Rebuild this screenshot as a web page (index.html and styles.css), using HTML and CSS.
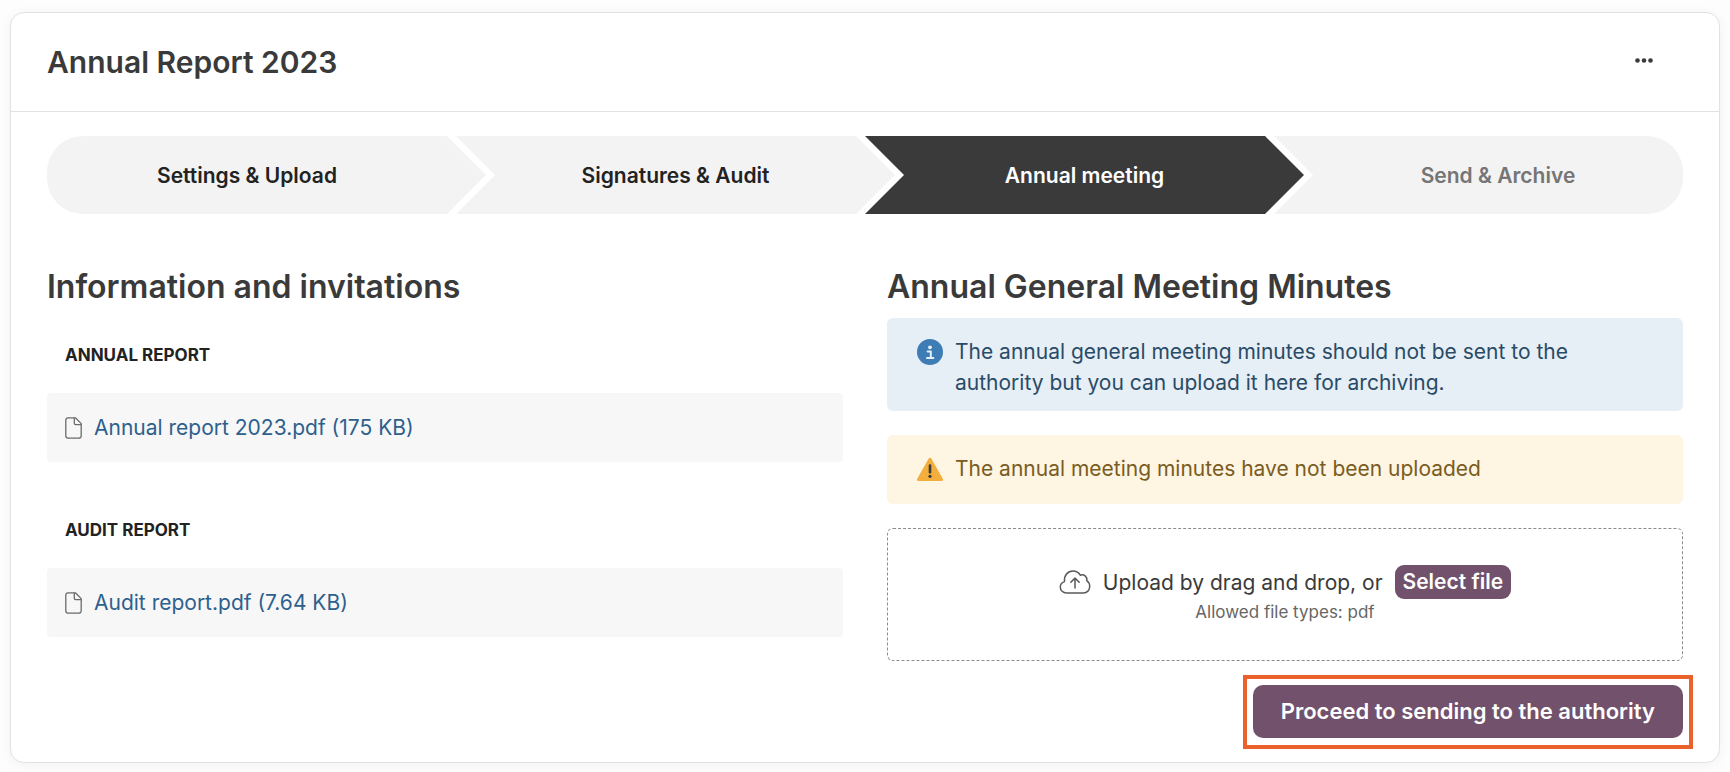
FILE: index.html
```html
<!DOCTYPE html>
<html lang="en">
<head>
  <meta charset="UTF-8">
  <meta name="viewport" content="width=device-width, initial-scale=1.0">
  <title>Annual Report 2023</title>
  <link rel="stylesheet" href="styles.css">
</head>
<body>
  <main class="card">
    <header class="card-header">
      <h1 class="title">Annual Report 2023</h1>
      <button class="more" type="button" aria-label="More options">
        <svg width="18" height="6" viewBox="0 0 18 6" fill="currentColor">
          <circle cx="2.5" cy="2.5" r="2.3"/>
          <circle cx="9" cy="2.5" r="2.3"/>
          <circle cx="15.5" cy="2.5" r="2.3"/>
        </svg>
      </button>
    </header>

    <div class="card-body">
      <ol class="steps">
        <li class="step first">Settings &amp; Upload</li>
        <li class="step">Signatures &amp; Audit</li>
        <li class="step active" aria-current="step">Annual meeting</li>
        <li class="step last">Send &amp; Archive</li>
      </ol>

      <div class="columns">
        <section class="column">
          <h2 class="heading">Information and invitations</h2>

          <div class="file-group">
            <h3 class="label">Annual report</h3>
            <div class="file">
              <svg class="file-icon" width="17" height="22" viewBox="0 0 17 22" fill="none" stroke="currentColor" stroke-width="1.3" stroke-linejoin="round">
                <path d="M3 .8h7.4l5.8 5.8v12.2a2.3 2.3 0 0 1-2.3 2.3H3A2.3 2.3 0 0 1 .8 18.8V3A2.3 2.3 0 0 1 3 .8z"/>
                <path d="M9.3.8v5.4c0 .9.5 1.4 1.4 1.4h5.4"/>
              </svg>
              <a class="file-link" href="#">Annual report 2023.pdf (175 KB)</a>
            </div>
          </div>

          <div class="file-group">
            <h3 class="label">Audit report</h3>
            <div class="file">
              <svg class="file-icon" width="17" height="22" viewBox="0 0 17 22" fill="none" stroke="currentColor" stroke-width="1.3" stroke-linejoin="round">
                <path d="M3 .8h7.4l5.8 5.8v12.2a2.3 2.3 0 0 1-2.3 2.3H3A2.3 2.3 0 0 1 .8 18.8V3A2.3 2.3 0 0 1 3 .8z"/>
                <path d="M9.3.8v5.4c0 .9.5 1.4 1.4 1.4h5.4"/>
              </svg>
              <a class="file-link" href="#">Audit report.pdf (7.64 KB)</a>
            </div>
          </div>
        </section>

        <section class="column">
          <h2 class="heading">Annual General Meeting Minutes</h2>

          <div class="alert info">
            <svg class="alert-icon" width="26" height="30" viewBox="0 0 26 30">
              <circle cx="13" cy="16" r="13" fill="#3e7cb5"/>
              <circle cx="13" cy="11.3" r="1.9" fill="#e6eef6"/>
              <path d="M10.6 15.4h3.2v6.4M10 22h6.4" fill="none" stroke="#e6eef6" stroke-width="2" stroke-linecap="round" stroke-linejoin="round"/>
            </svg>
            <p class="alert-text">The annual general meeting minutes should not be sent to the authority but you can upload it here for archiving.</p>
          </div>

          <div class="alert warning">
            <svg class="alert-icon" width="26" height="30" viewBox="0 0 26 30">
              <path d="M13 6.3 24.5 26.5H1.5z" fill="#f3ae3d" stroke="#f3ae3d" stroke-width="3" stroke-linejoin="round"/>
              <path d="M13 12.5v6.7" stroke="#3a3a3a" stroke-width="2.6" stroke-linecap="round"/>
              <circle cx="13" cy="23.3" r="1.6" fill="#3a3a3a"/>
            </svg>
            <p class="alert-text">The annual meeting minutes have not been uploaded</p>
          </div>

          <div class="dropzone">
            <div class="dropzone-row">
              <svg class="cloud" width="32" height="24" viewBox="0 0 31 24" fill="none" stroke="currentColor" stroke-width="1.5" stroke-linecap="round" stroke-linejoin="round">
                <path d="M7 23C3.5 23 .8 20.4.8 17.2c0-2.7 1.6-4.8 4.2-5.6C4.3 5.4 8.3 1 13.5 1c3.2 0 5.8 1.5 7.3 4.2 3.7-1.3 7 1.3 6.5 5.4 1.9 1.4 2.9 3.4 2.9 5.8 0 3.8-2.7 6.6-6.2 6.6z"/>
                <path d="M15.5 18V8.3M11.3 12.3l4.2-4.2 4.2 4.2"/>
              </svg>
              <span>Upload by drag and drop, or</span>
              <button class="select-file" type="button">Select file</button>
            </div>
            <p class="hint">Allowed file types: pdf</p>
          </div>

          <div class="actions">
            <div class="highlight">
              <button class="proceed" type="button">Proceed to sending to the authority</button>
            </div>
          </div>
        </section>
      </div>
    </div>
  </main>
</body>
</html>
```
FILE: styles.css
```css
* {
  box-sizing: border-box;
}

body {
  margin: 0;
  padding: 12px 10px 8px;
  font-family: 'Inter', 'Open Sans', sans-serif;
  font-size: 21px;
  line-height: 31px;
  color: #3a3a3a;
  background-color: #fdfdfd;
}

h1, h2, h3, p, ol {
  margin: 0;
  padding: 0;
}

.card {
  background-color: #fff;
  border: 1px solid #e2e2e2;
  border-radius: 14px;
  box-shadow: 0 2px 12px rgba(0, 0, 0, 0.05);
}

.card-header {
  display: flex;
  align-items: center;
  justify-content: space-between;
  padding: 29px 60px 28px 36px;
  border-bottom: 1px solid #e2e2e2;
}

.title {
  font-size: 30px;
  line-height: 41px;
  font-weight: 600;
}

.more {
  display: flex;
  padding: 4px 6px 8px;
  border: none;
  background: none;
  color: #3a3a3a;
  cursor: pointer;
}

.card-body {
  padding: 24px 36px;
}

/* Progress steps */
.steps {
  display: grid;
  grid-template-columns: repeat(4, 1fr);
  list-style: none;
}

.step {
  display: flex;
  align-items: center;
  justify-content: center;
  height: 78px;
  margin-right: -30px;
  font-weight: 600;
  color: #222;
  background-color: #f3f3f3;
  clip-path: polygon(0 0, calc(100% - 39px) 0, 100% 50%, calc(100% - 39px) 100%, 0 100%, 39px 50%);
}

.step.first {
  padding-right: 39px;
  border-radius: 36px 0 0 36px;
  clip-path: polygon(0 0, calc(100% - 39px) 0, 100% 50%, calc(100% - 39px) 100%, 0 100%);
}

.step.active {
  color: #fff;
  background-color: #3a3a3a;
}

.step.last {
  margin-right: 0;
  padding-left: 39px;
  border-radius: 0 36px 36px 0;
  color: #757575;
  clip-path: polygon(0 0, 100% 0, 100% 100%, 0 100%, 39px 50%);
}

.columns {
  display: grid;
  grid-template-columns: 1fr 1fr;
  gap: 44px;
  padding-top: 52px;
}

.heading {
  margin-bottom: 10px;
  font-size: 32px;
  line-height: 42px;
  font-weight: 600;
}

/* Files */
.file-group {
  margin-bottom: 31px;
}

.label {
  padding: 22px 18px;
  font-size: 17px;
  line-height: 31px;
  font-weight: 700;
  text-transform: uppercase;
  color: #222;
}

.file {
  display: flex;
  align-items: center;
  gap: 12px;
  height: 69px;
  padding: 0 18px;
  border-radius: 4px;
  background-color: #f7f7f7;
}

.file-icon {
  color: #6b6b6b;
}

.file-link {
  color: #2d608d;
  text-decoration: none;
}

/* Alerts */
.alert {
  display: flex;
  gap: 12px;
  min-height: 69px;
  margin-bottom: 24px;
  padding: 18px 30px 13px;
  border-radius: 6px;
}

.alert-icon {
  flex: none;
}

.info {
  color: #2a4b66;
  background-color: #e6eef6;
}

.warning {
  color: #7a5c22;
  background-color: #fef5e3;
}

/* Upload */
.dropzone {
  padding: 36px 24px 34px;
  border: 1px dashed #8c8c8c;
  border-radius: 6px;
  text-align: center;
}

.dropzone-row {
  display: flex;
  align-items: center;
  justify-content: center;
  gap: 12px;
}

.cloud {
  color: #5a5a5a;
}

.select-file {
  padding: 0 8px;
  border: none;
  border-radius: 9px;
  font: inherit;
  font-weight: 600;
  line-height: 34px;
  color: #fff;
  background-color: #71516b;
  cursor: pointer;
}

.hint {
  font-size: 17px;
  line-height: 27px;
  color: #666;
}

.actions {
  display: flex;
  justify-content: flex-end;
  padding-top: 24px;
}

/* Frame that draws the eye to the next action */
.highlight {
  margin: -10px -10px -11px;
  padding: 6px 6px 7px;
  border: 4px solid #ea612b;
}

.proceed {
  display: block;
  padding: 11px 28px;
  border: none;
  border-radius: 10px;
  font: inherit;
  font-size: 22px;
  font-weight: 600;
  color: #fff;
  background-color: #71516b;
  cursor: pointer;
}
```
